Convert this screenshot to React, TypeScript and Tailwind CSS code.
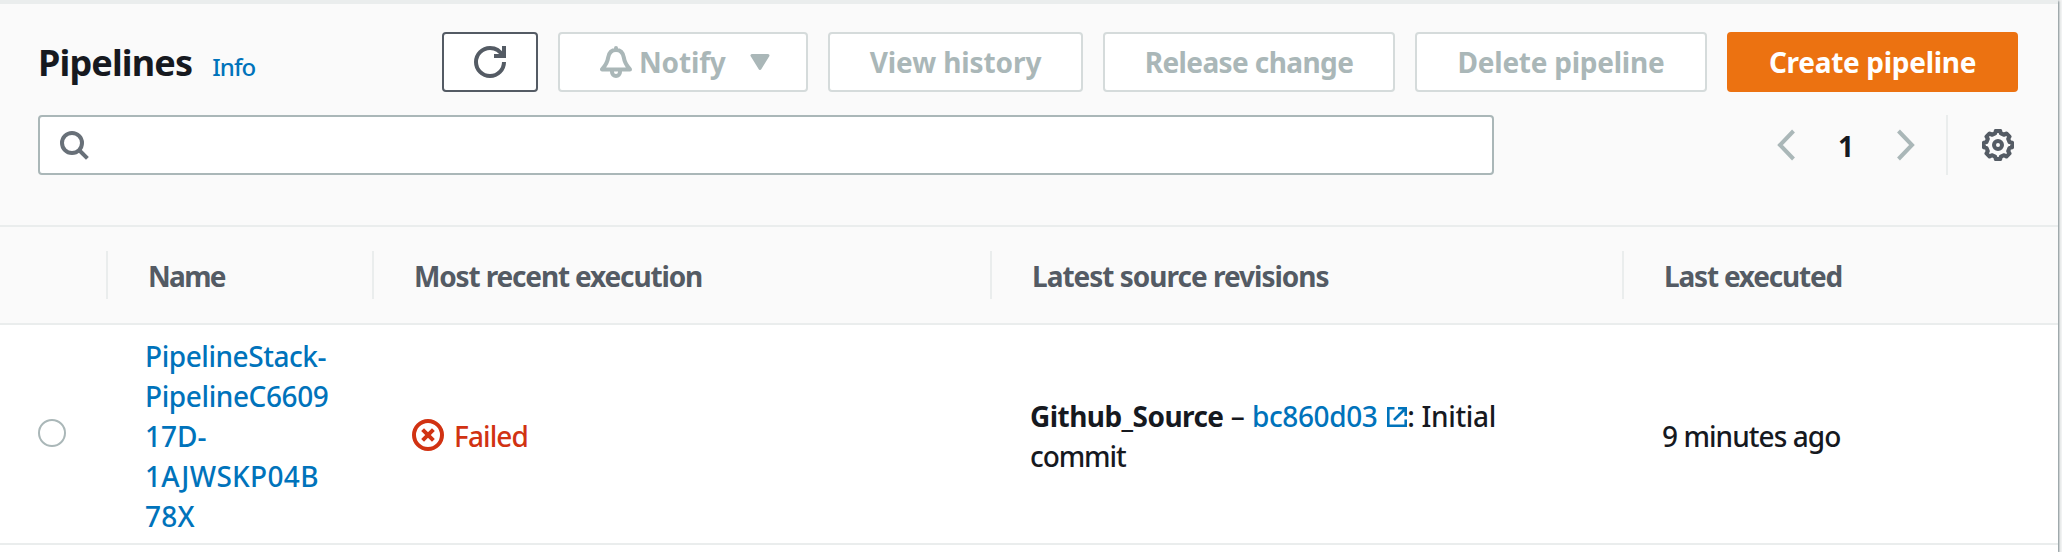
import type { ReactNode } from "react";

const font = "font-['Noto_Sans','Open_Sans',sans-serif]";

function Button({ children, className }: { children: ReactNode; className: string }) {
  return (
    <button
      type="button"
      className={`flex h-[60px] shrink-0 items-center rounded-[4px] border-2 text-[28px] leading-[40px] font-bold whitespace-nowrap ${className}`}
    >
      {children}
    </button>
  );
}

const disabled = "border-[#d5dbdb] bg-white text-[#aab7b8]";

function RefreshIcon() {
  return (
    <svg width="32" height="32" viewBox="0 0 16 16" fill="none" stroke="#545b64" strokeWidth="2">
      <path d="M15 8c0 3.87-3.13 7-7 7s-7-3.13-7-7 3.13-7 7-7c2.79 0 5.2 1.63 6.33 4" />
      <path d="M10 5h5V0" />
    </svg>
  );
}

function BellIcon() {
  return (
    <svg width="32" height="32" viewBox="0 0 16 16" fill="none" stroke="#aab7b8" strokeWidth="2" strokeLinejoin="round" strokeLinecap="round">
      <path d="M8 1v.6M1 11.7h14c-2.2-2.4-2.8-3.9-3.1-6C11.5 3.2 10 2 8 2S4.500 3.200 4.100 5.700C3.800 7.800 3.200 9.300 1 11.700Z" />
      <path d="M6 12.300v.7a2 2 0 0 0 4 0v-.7" />
    </svg>
  );
}

function SearchIcon() {
  return (
    <svg width="32" height="32" viewBox="0 0 16 16" fill="none" stroke="#687078" strokeWidth="2">
      <circle cx="7" cy="7" r="5" />
      <path d="M10.500 10.500 14.700 14.700" />
    </svg>
  );
}

function Chevron({ flip }: { flip?: boolean }) {
  return (
    <svg width="20" height="32" viewBox="0 0 20 32" fill="none" stroke="#aab7b8" strokeWidth="4" className={flip ? "rotate-180" : ""}>
      <path d="M17.500 2 4 16 17.500 30" />
    </svg>
  );
}

const gearOutline = Array.from({ length: 8 }, (_, i) => i * 45)
  .flatMap((a) => [
    [a - 9, 14.3],
    [a + 9, 14.3],
    [a + 14, 11.9],
    [a + 31, 11.9],
  ])
  .map(([deg, r]) => {
    const t = (deg * Math.PI) / 180;
    return `${(16 + r * Math.sin(t)).toFixed(2)},${(16 - r * Math.cos(t)).toFixed(2)}`;
  })
  .join(" ");

function GearIcon() {
  return (
    <svg width="32" height="32" viewBox="0 0 32 32" fill="none" stroke="#545b64" strokeWidth="4">
      <circle cx="16" cy="16" r="4" />
      <polygon points={gearOutline} strokeWidth="4" strokeLinejoin="round" />
    </svg>
  );
}

function FailedIcon() {
  return (
    <svg width="32" height="32" viewBox="0 0 16 16" fill="none" stroke="#d13212" strokeWidth="2">
      <circle cx="8" cy="8" r="7" />
      <path d="m5.300 5.300 5.400 5.400M10.700 5.300 5.300 10.700" />
    </svg>
  );
}

function ExternalIcon() {
  return (
    <svg width="20" height="20" viewBox="0 0 20 20" fill="none" stroke="#0073bb" strokeWidth="2.6" className="ml-[3px] inline-block align-baseline">
      <path d="M7.500 1.300H1.300v17.400h17.400V12.500" />
      <path d="M11 1.300h7.700V9M18.500 1.500 7 13" />
    </svg>
  );
}

function HeaderCell({ children, className }: { children: ReactNode; className: string }) {
  return (
    <div className={`flex h-12 shrink-0 items-center border-l-2 border-[#eaeded] pl-10 pt-0.5 text-[28px] leading-[40px] font-bold whitespace-nowrap text-[#545b64] ${className}`}>
      <span>{children}</span>
    </div>
  );
}

const nameLines = [
  { text: "PipelineStack-", tracking: "tracking-[-0.45px]" },
  { text: "PipelineC6609", tracking: "tracking-[-0.4px]" },
  { text: "17D-", tracking: "tracking-normal" },
  { text: "1AJWSKP04B", tracking: "tracking-[0.3px]" },
  { text: "78X", tracking: "tracking-[0.2px]" },
];

export default function App() {
  return (
    <div className={`${font} h-[552px] w-[2062px] overflow-hidden bg-[#f2f3f3] text-[#16191f]`}>
      <div className="h-[552px] w-[2058px] border-t-4 border-[#eaeded] bg-white shadow-[1px_1px_2px_0px_rgba(0,28,36,0.5)]">
        <header className="h-[221px] bg-[#fafafa] pr-[40px] pl-[38px] pt-[28px]">
          <div className="flex h-[60px] items-center">
            <h1 className="pt-0.5 text-[36px] leading-[44px] font-bold tracking-[-0.85px]">Pipelines</h1>
            <a className="ml-5 pt-2.5 text-[24px] leading-[32px] font-medium tracking-[-0.9px] text-[#0073bb]">Info</a>
            <div className="ml-auto flex gap-5">
              <Button className="w-24 justify-center border-[#545b64] bg-white"><RefreshIcon /></Button>
              <Button className={`w-[250px] pl-10 ${disabled}`}>
                <BellIcon />
                <span className="ml-[7px] tracking-[-0.15px]">Notify</span>
                <svg width="20" height="18" viewBox="0 0 20 18" className="ml-6">
                  <path d="M2 2.500h16l-8 13z" fill="#aab7b8" stroke="#aab7b8" strokeWidth="3" strokeLinejoin="round" />
                </svg>
              </Button>
              <Button className={`w-[255px] justify-center tracking-[-0.1px] ${disabled}`}>View history</Button>
              <Button className={`w-[292px] justify-center tracking-[-0.6px] ${disabled}`}>Release change</Button>
              <Button className={`w-[292px] justify-center tracking-[-0.25px] ${disabled}`}>Delete pipeline</Button>
              <Button className="w-[291px] justify-center border-[#ec7211] bg-[#ec7211] tracking-[-0.3px] text-white">Create pipeline</Button>
            </div>
          </div>
          <div className="mt-[23px] flex h-[60px] items-center">
            <div className="flex h-[60px] w-[1456px] items-center rounded-[4px] border-2 border-[#aab7b8] bg-white pl-[18px]">
              <SearchIcon />
            </div>
            <div className="ml-auto flex items-center">
              <Chevron />
              <span className="w-[100px] pt-0.5 text-center text-[28px] leading-[40px] font-bold">1</span>
              <Chevron flip />
              <div className="ml-[30px] h-[60px] w-0.5 bg-[#eaeded]" />
              <div className="mr-1 ml-[34px]"><GearIcon /></div>
            </div>
          </div>
        </header>

        <div className="flex h-[100px] items-center border-y-2 border-[#eaeded] bg-[#fafafa] pl-[106px]">
          <HeaderCell className="w-[266px] tracking-[-1.7px]">Name</HeaderCell>
          <HeaderCell className="w-[618px] tracking-[-1.15px]">Most recent execution</HeaderCell>
          <HeaderCell className="w-[632px] tracking-[-1px]">Latest source revisions</HeaderCell>
          <HeaderCell className="w-[300px] tracking-[-1.2px]">Last executed</HeaderCell>
        </div>

        <div className="flex h-[220px] items-center border-b-2 border-[#eaeded] text-[28px] leading-[40px] font-medium whitespace-nowrap">
          <div className="w-[145px] pb-0.5 pl-[38px]">
            <div className="h-7 w-7 rounded-full border-2 border-[#aab7b8] bg-white" />
          </div>
          <div className="w-[267px] pt-[3px] text-[#0073bb]">
            {nameLines.map((line) => (
              <div key={line.text} className={line.tracking}>{line.text}</div>
            ))}
          </div>
          <div className="flex w-[618px] items-center pt-0.5 text-[#d13212]">
            <FailedIcon />
            <span className="ml-2.5 pt-0.5 tracking-[-0.9px]">Failed</span>
          </div>
          <div className="w-[632px] pt-[3px]">
            <div>
              <b className="tracking-[-0.550px]">Github_Source</b>
              <span> – </span>
              <a className="tracking-[-0.4px] text-[#0073bb]">bc860d03 <ExternalIcon /></a>
              <span className="tracking-[-0.35px]">: Initial</span>
            </div>
            <div className="tracking-[-1.1px]">commit</div>
          </div>
          <div className="pt-[3px] tracking-[-0.95px]">9 minutes ago</div>
        </div>
      </div>
    </div>
  );
}
